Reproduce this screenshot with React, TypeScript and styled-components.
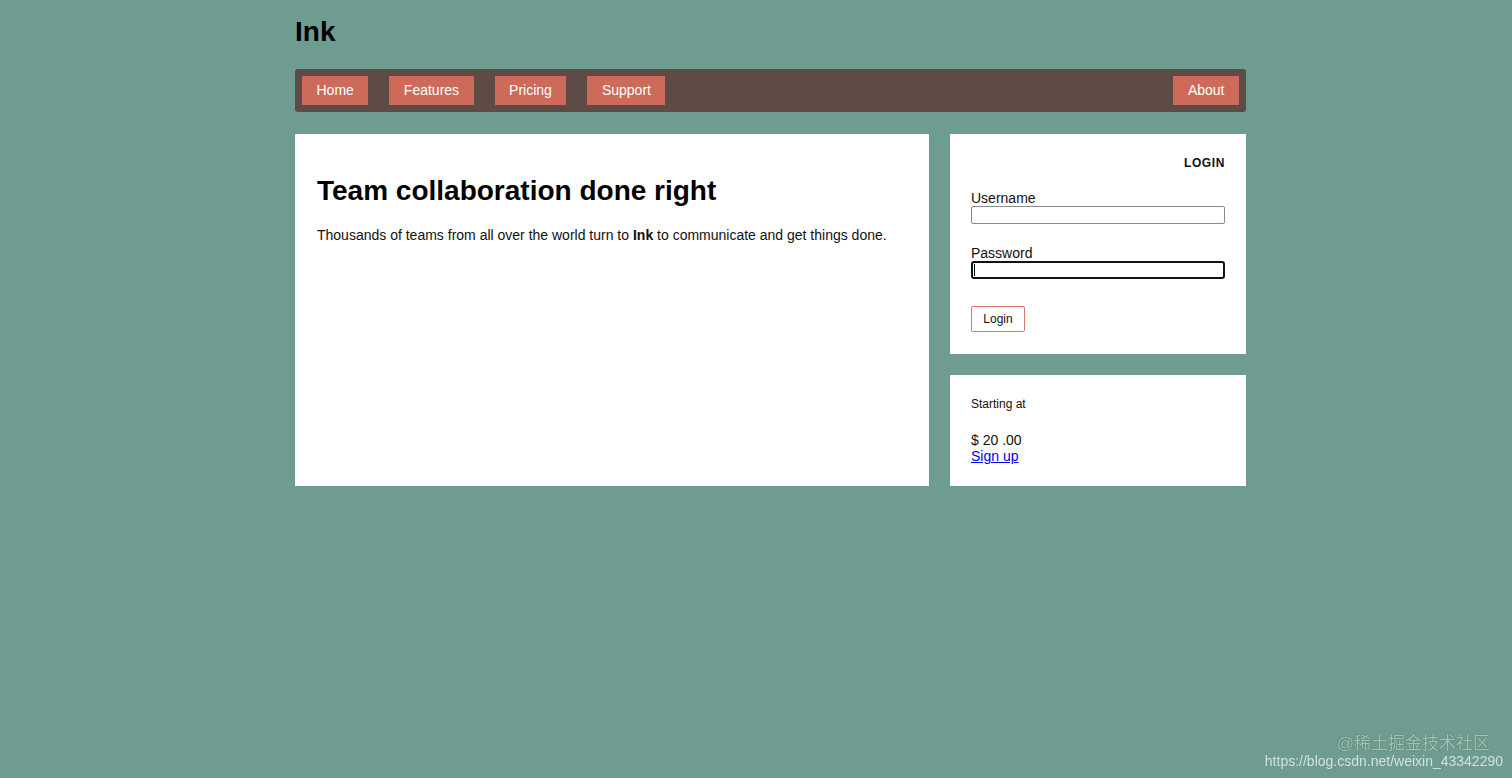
import React from "react";
import styled, { createGlobalStyle } from "styled-components";

const Global = createGlobalStyle`
  html, body { margin: 0; padding: 0; }
  body {
    background: #6f9c90;
    font-family: "Liberation Sans", Arial, sans-serif;
    color: #111;
    min-height: 778px;
  }
`;

const Page = styled.div`
  width: 951px;
  margin-left: 295px;
  padding-top: 16px;
`;

const Brand = styled.h1`
  margin: 0;
  font-size: 28px;
  line-height: 32px;
  font-weight: 700;
  color: #000;
`;

const Nav = styled.nav`
  margin-top: 21px;
  display: flex;
  align-items: center;
  gap: 21px;
  padding: 7px;
  height: 43px;
  box-sizing: border-box;
  background: #5f4b45;
  border-radius: 3px;
`;

const NavButton = styled.a<{ $push?: boolean }>`
  display: block;
  padding: 6px 14.5px;
  line-height: 17px;
  font-size: 14px;
  color: #fff;
  background: #cd6a5a;
  text-decoration: none;
  margin-left: ${(p) => (p.$push ? "auto" : "0")};
`;

const Row = styled.div`
  margin-top: 22px;
  display: grid;
  grid-template-columns: 634px 296px;
  gap: 21px;
`;

const Main = styled.section`
  background: #fff;
  padding: 41px 22px 22px;
`;

const Headline = styled.h2`
  margin: 0;
  font-size: 28px;
  line-height: 32px;
  font-weight: 700;
  color: #000;
`;

const Lead = styled.p`
  margin: 20px 0 0;
  font-size: 14px;
  line-height: 16px;
  color: #111;
`;

const Side = styled.aside`
  display: flex;
  flex-direction: column;
  gap: 21px;
`;

const Card = styled.div`
  background: #fff;
  padding: 22px 21px;
  display: flex;
  flex-direction: column;
  font-size: 14px;
  line-height: 16px;
`;

const CardTitle = styled.div`
  text-align: right;
  font-size: 12px;
  line-height: 14px;
  font-weight: 700;
  letter-spacing: 0.6px;
  color: #111;
`;

const Label = styled.label<{ $top: number }>`
  display: block;
  margin-top: ${(p) => p.$top}px;
  font-size: 14px;
  line-height: 16px;
  color: #111;
`;

const InputWrap = styled.div`
  position: relative;
`;

const Input = styled.input<{ $focused?: boolean }>`
  display: block;
  box-sizing: border-box;
  width: 254px;
  height: 18px;
  margin: 0;
  padding: 0 2px;
  background: #fff;
  border: ${(p) => (p.$focused ? "2px solid #111" : "1px solid #8a8a8a")};
  border-radius: ${(p) => (p.$focused ? "3px" : "2px")};
  outline: none;
  font-family: inherit;
  font-size: 13px;
`;

const Caret = styled.span`
  position: absolute;
  left: 3px;
  top: 3px;
  width: 1px;
  height: 12px;
  background: #000;
`;

const LoginButton = styled.button`
  align-self: flex-start;
  margin-top: 27px;
  width: 54px;
  height: 26px;
  padding: 0;
  background: #fff;
  border: 1px solid #d6796b;
  border-radius: 2px;
  font-family: "Liberation Sans", Arial, sans-serif;
  font-size: 12px;
  color: #111;
`;

const Small = styled.div`
  font-size: 12px;
  line-height: 14px;
  color: #111;
`;

const Price = styled.div`
  margin-top: 21px;
  font-size: 14px;
  line-height: 16px;
  color: #111;
`;

const LinkLine = styled.div`
  font-size: 14px;
  line-height: 16px;
`;

const SignUp = styled.a`
  color: #0000ee;
  text-decoration: underline;
`;

const Watermark = styled.div`
  position: fixed;
  right: 9px;
  bottom: 8px;
  display: flex;
  flex-direction: column;
  align-items: flex-end;
  font-family: "Liberation Sans", "Noto Sans CJK SC", sans-serif;
  pointer-events: none;
`;

const WmTop = styled.span`
  font-size: 17px;
  line-height: 19px;
  margin-right: 13px;
  color: rgba(165, 200, 190, 0.95);
  text-shadow: 0 0 1px rgba(50, 80, 70, 0.9);
`;

const WmBottom = styled.span`
  font-size: 14px;
  line-height: 17px;
  color: rgba(225, 238, 234, 0.85);
`;

export default function App() {
  return (
    <>
      <Global />
      <Page>
        <Brand>Ink</Brand>
        <Nav>
          <NavButton href="#">Home</NavButton>
          <NavButton href="#">Features</NavButton>
          <NavButton href="#">Pricing</NavButton>
          <NavButton href="#">Support</NavButton>
          <NavButton href="#" $push>
            About
          </NavButton>
        </Nav>
        <Row>
          <Main>
            <Headline>Team collaboration done right</Headline>
            <Lead>
              Thousands of teams from all over the world turn to <b>Ink</b> to
              communicate and get things done.
            </Lead>
          </Main>
          <Side>
            <Card>
              <CardTitle>LOGIN</CardTitle>
              <Label $top={20}>Username</Label>
              <Input type="text" />
              <Label $top={21}>Password</Label>
              <InputWrap>
                <Input type="password" $focused />
                <Caret />
              </InputWrap>
              <LoginButton>Login</LoginButton>
            </Card>
            <Card>
              <Small>Starting at</Small>
              <Price>$ 20 .00</Price>
              <LinkLine>
                <SignUp href="#">Sign up</SignUp>
              </LinkLine>
            </Card>
          </Side>
        </Row>
      </Page>
      <Watermark>
        <WmTop>@稀土掘金技术社区</WmTop>
        <WmBottom>https://blog.csdn.net/weixin_43342290</WmBottom>
      </Watermark>
    </>
  );
}
